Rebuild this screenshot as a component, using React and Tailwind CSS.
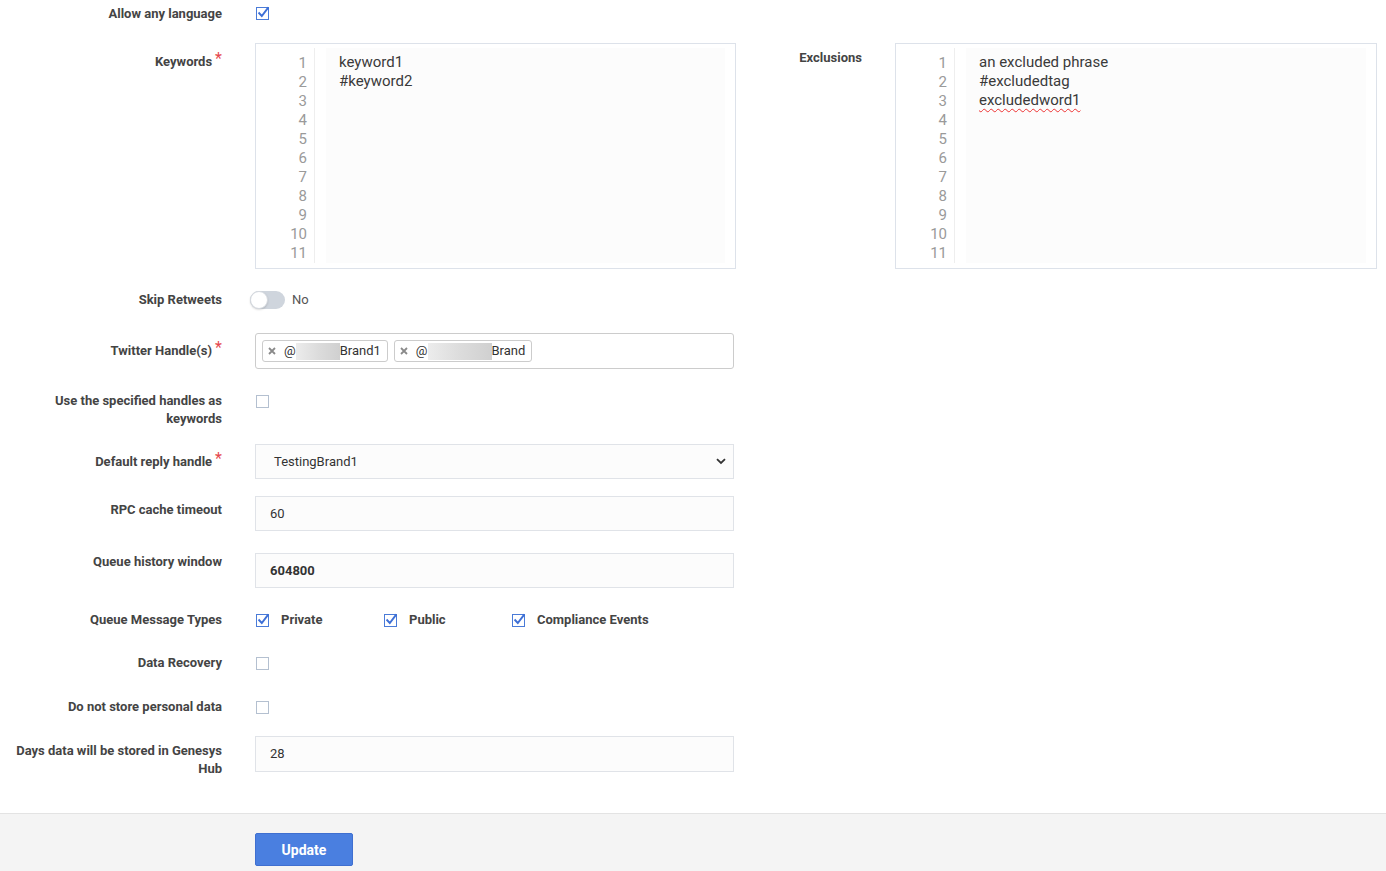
import React from "react";

function Check({ checked }) {
  if (checked) {
    return (
      <svg width="14" height="14" viewBox="0 0 14 14" className="block shrink-0">
        <rect x="0.5" y="1.5" width="12" height="12" fill="white" stroke="#4a7bd8" strokeWidth="1" />
        <path d="M3.2 7.2 L5.8 10 L11.8 2.2" stroke="#3d6fd6" strokeWidth="1.9" fill="none" strokeLinecap="square" />
      </svg>
    );
  }
  return <div className="w-[13px] h-[13px] border border-[#b4c0d0] bg-white shrink-0" />;
}

function Label({ children, required, className = "" }) {
  return (
    <div className={"w-[222px] shrink-0 pl-[10px] text-right text-[13px] leading-[18px] font-bold text-[#444] " + className}>
      {children}
      {required && (
        <span className="relative top-[-3px] ml-[3px] inline-block h-[18px] align-top text-[16px] leading-[18px] font-normal text-[#e5484d]">
          *
        </span>
      )}
    </div>
  );
}

function Editor({ lines, width }) {
  const nums = Array.from({ length: 11 }, (_, i) => i + 1);
  return (
    <div className={"h-[226px] border border-[#dde2ea] pt-[4px] pb-[5px] pr-[10px] flex bg-white " + width}>
      <div className="w-[59px] shrink-0 border-r border-[#eeeeee] pr-[7px] pt-[6px] text-right text-[15px] leading-[19px] text-[#9a9a9a]">
        {nums.map((n) => (
          <div key={n}>{n}</div>
        ))}
      </div>
      <div className="ml-[11px] flex-1 bg-[#fcfcfc] pl-[13px] pt-[5px] text-[15px] leading-[19px] text-[#3a3a3a]">
        {lines}
      </div>
    </div>
  );
}

function Tag({ blurW, name }) {
  return (
    <div className="h-[22px] border border-[#cccccc] rounded-[3px] bg-white flex items-center pl-[5px] pr-[6px] text-[13px] leading-[18px] text-[#333]">
      <svg width="8" height="8" viewBox="0 0 8 8" className="mr-[8px] shrink-0">
        <path d="M1 1 L7 7 M7 1 L1 7" stroke="#8a8a8a" strokeWidth="1.8" />
      </svg>
      <span>@</span>
      <div className={"h-[17px] bg-gradient-to-r from-[#ececec] via-[#dcdcdc] to-[#d0d0d0] " + blurW} />
      <span>{name}</span>
    </div>
  );
}

export default function App() {
  return (
    <div className="min-h-[871px] bg-white flex flex-col font-['Roboto','Liberation_Sans',sans-serif] text-[#444]">
      <div className="flex flex-col">
        {/* Allow any language */}
        <div className="flex pt-[5px]">
          <Label>Allow any language</Label>
          <div className="ml-[34px] mt-[1px]">
            <Check checked />
          </div>
        </div>

        {/* Keywords / Exclusions */}
        <div className="flex mt-[20px]">
          <Label required className="pt-[10px]">Keywords</Label>
          <div className="ml-[33px]">
            <Editor
              width="w-[481px]"
              lines={
                <>
                  <div>keyword1</div>
                  <div>#keyword2</div>
                </>
              }
            />
          </div>
          <div className="w-[126px] shrink-0 text-right pt-[6px] text-[13px] leading-[18px] font-bold text-[#444]">Exclusions</div>
          <div className="ml-[33px]">
            <Editor
              width="w-[482px]"
              lines={
                <>
                  <div>an excluded phrase</div>
                  <div>#excludedtag</div>
                  <div>
                    <span className="underline decoration-wavy decoration-[#e33] decoration-[1px] underline-offset-[3px]">excludedword1</span>
                  </div>
                </>
              }
            />
          </div>
        </div>

        {/* Skip Retweets */}
        <div className="flex mt-[22px] items-center">
          <Label>Skip Retweets</Label>
          <div className="ml-[28px] flex items-center">
            <div className="relative w-[35px] h-[18px] rounded-full bg-[#cfd5dd]">
              <div className="absolute left-0 top-0 w-[18px] h-[18px] rounded-full bg-white border border-[#d5d9df] shadow-[0_1px_2px_rgba(0,0,0,0.15)]" />
            </div>
            <span className="ml-[7px] text-[13px] leading-[18px] text-[#555]">No</span>
          </div>
        </div>

        {/* Twitter handles */}
        <div className="flex mt-[24px]">
          <Label required className="pt-[9px]">Twitter Handle(s)</Label>
          <div className="ml-[33px] w-[479px] h-[36px] border border-[#cccccc] rounded-[3px] flex items-center pl-[6px] gap-[6px]">
            <Tag blurW="w-[44px]" name="Brand1" />
            <Tag blurW="w-[64px]" name="Brand" />
          </div>
        </div>

        {/* Use handles as keywords */}
        <div className="flex mt-[22px]">
          <Label className="pt-[1px]">Use the specified handles as keywords</Label>
          <div className="ml-[34px] mt-[4px]">
            <Check />
          </div>
        </div>

        {/* Default reply handle */}
        <div className="flex mt-[15px]">
          <Label required className="pt-[10px]">Default reply handle</Label>
          <div className="ml-[33px] mt-[1px] w-[479px] h-[35px] border border-[#e0e3e8] bg-[#fcfcfc] flex items-center pl-[18px] pr-[7px] text-[13px] text-[#333]">
            <span className="flex-1">TestingBrand1</span>
            <svg width="10" height="7" viewBox="0 0 10 7">
              <path d="M1 1.2 L5 5 L9 1.2" stroke="#333" strokeWidth="1.8" fill="none" />
            </svg>
          </div>
        </div>

        {/* RPC cache timeout */}
        <div className="flex mt-[17px]">
          <Label className="pt-[5px]">RPC cache timeout</Label>
          <div className="ml-[33px] w-[479px] h-[35px] border border-[#e0e3e8] bg-[#fcfcfc] flex items-center pl-[14px] text-[13px] text-[#333]">60</div>
        </div>

        {/* Queue history window */}
        <div className="flex mt-[21px]">
          <Label className="pt-[1px]">Queue history window</Label>
          <div className="ml-[33px] mt-[1px] w-[479px] h-[35px] border border-[#e0e3e8] bg-[#fcfcfc] flex items-center pl-[14px] text-[13px] font-bold text-[#333]">604800</div>
        </div>

        {/* Queue Message Types */}
        <div className="flex mt-[23px]">
          <Label>Queue Message Types</Label>
          <div className="ml-[34px] flex text-[13px] leading-[18px] font-bold text-[#444]">
            {["Private", "Public", "Compliance Events"].map((t) => (
              <div key={t} className="w-[128px] flex items-start">
                <div className="mt-[2px]">
                  <Check checked />
                </div>
                <span className="ml-[11px] whitespace-nowrap">{t}</span>
              </div>
            ))}
          </div>
        </div>

        {/* Data Recovery */}
        <div className="flex mt-[25px]">
          <Label>Data Recovery</Label>
          <div className="ml-[34px] mt-[3px]">
            <Check />
          </div>
        </div>

        {/* Do not store personal data */}
        <div className="flex mt-[26px]">
          <Label>Do not store personal data</Label>
          <div className="ml-[34px] mt-[3px]">
            <Check />
          </div>
        </div>

        {/* Days data */}
        <div className="flex mt-[20px]">
          <Label className="pt-[6px]">Days data will be stored in Genesys Hub</Label>
          <div className="ml-[33px] w-[479px] h-[36px] border border-[#e0e3e8] bg-[#fcfcfc] flex items-center pl-[14px] text-[13px] text-[#333]">28</div>
        </div>
      </div>

      {/* Footer */}
      <div className="mt-[35px] flex-1 border-t border-[#e3e3e3] bg-[#f4f4f4] pt-[19px] pl-[255px]">
        <button className="w-[98px] h-[33px] rounded-[2px] border border-[#3f6fd0] bg-[#4a7fe0] text-white text-[14px] font-bold pt-[2px]">
          Update
        </button>
      </div>
    </div>
  );
}
